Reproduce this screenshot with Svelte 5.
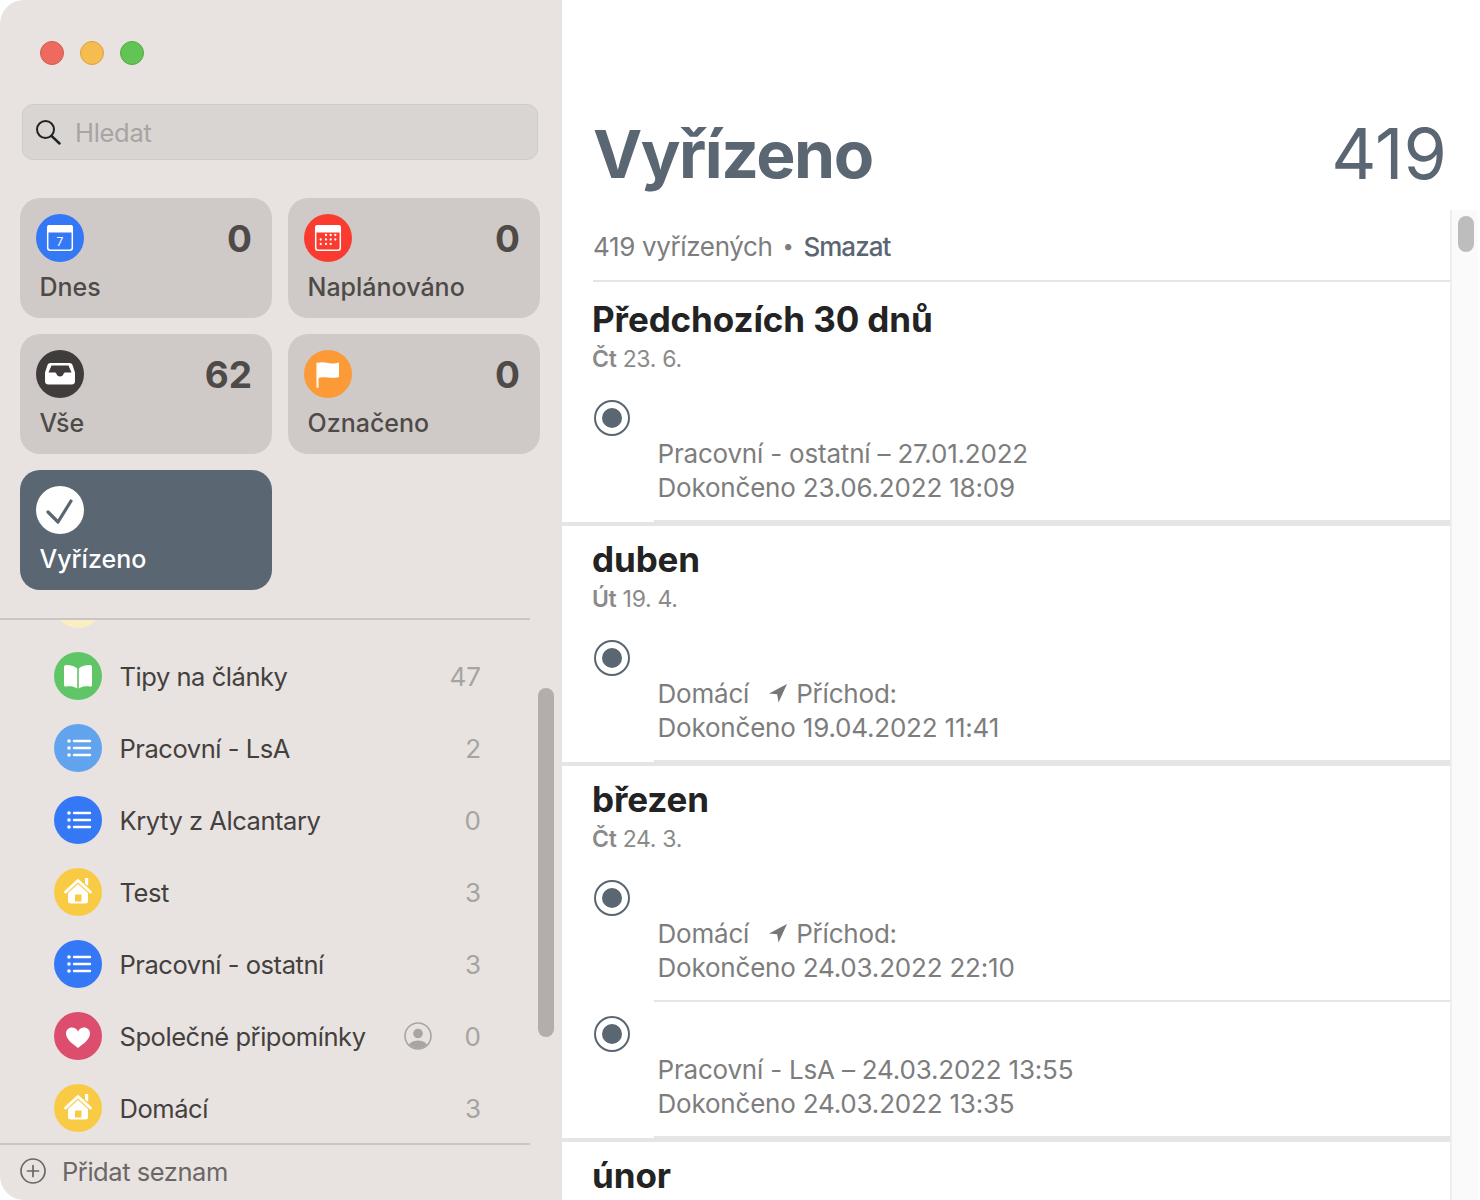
<script>
  const smart = [
    { id: "today", name: "Dnes", count: 0, color: "#3478f6" },
    { id: "scheduled", name: "Naplánováno", count: 0, color: "#fb3b30" },
    { id: "all", name: "Vše", count: 62, color: "#3f3c3b" },
    { id: "flagged", name: "Označeno", count: 0, color: "#fd9a38" },
    { id: "done", name: "Vyřízeno", count: null, color: "#fff", active: true }
  ];

  const lists = [
    { name: "", count: "", icon: "none", color: "#f9efc2" },
    { name: "Tipy na články", count: 47, icon: "book", color: "#5fc566" },
    { name: "Pracovní - LsA", count: 2, icon: "list", color: "#62a3ee" },
    { name: "Kryty z Alcantary", count: 0, icon: "list", color: "#3478f6" },
    { name: "Test", count: 3, icon: "house", color: "#f9cb45" },
    { name: "Pracovní - ostatní", count: 3, icon: "list", color: "#3478f6" },
    { name: "Společné připomínky", count: 0, icon: "heart", color: "#dc4d6e", shared: true },
    { name: "Domácí", count: 3, icon: "house", color: "#f9cb45" }
  ];

  const sections = [
    {
      title: "Předchozích 30 dnů",
      day: "Čt",
      date: "23. 6.",
      rows: [{ list: "Pracovní - ostatní – 27.01.2022", done: "Dokončeno 23.06.2022 18:09" }]
    },
    {
      title: "duben",
      day: "Út",
      date: "19. 4.",
      rows: [{ list: "Domácí", arrival: true, done: "Dokončeno 19.04.2022 11:41" }]
    },
    {
      title: "březen",
      day: "Čt",
      date: "24. 3.",
      rows: [
        { list: "Domácí", arrival: true, done: "Dokončeno 24.03.2022 22:10" },
        { list: "Pracovní - LsA – 24.03.2022 13:55", done: "Dokončeno 24.03.2022 13:35" }
      ]
    },
    { title: "únor", rows: [] }
  ];
</script>

{#snippet listGlyph(icon)}
  {#if icon === "list"}
    <circle cx="15" cy="17" r="1.8" fill="#fff" />
    <circle cx="15" cy="24" r="1.8" fill="#fff" />
    <circle cx="15" cy="31" r="1.8" fill="#fff" />
    <path d="M20 17h16M20 24h16M20 31h16" stroke="#fff" stroke-width="2.4" stroke-linecap="round" />
  {:else if icon === "book"}
    <path d="M23.200 16.500C20 13.500 15 12.800 11.800 13 10.800 13.100 10 14 10 15V33C10 34.200 10.800 34.800 11.800 34.600 15.500 34 20 34.300 23.200 36.500Z" fill="#fff" />
    <path d="M24.800 16.500C28 13.500 33 12.800 36.200 13 37.200 13.100 38 14 38 15V33C38 34.200 37.200 34.800 36.200 34.600 32.500 34 28 34.300 24.800 36.500Z" fill="#fff" />
  {:else if icon === "house"}
    <path d="M31 10h3.200v8l-3.200-2.500Z" fill="#fff" />
    <path d="M11.500 24 24 12.500 36.500 24" fill="none" stroke="#fff" stroke-width="2.800" stroke-linecap="round" stroke-linejoin="round" />
    <path fill-rule="evenodd" d="M24 16 34 25V33a2.500 2.500 0 0 1-2.500 2.500h-15A2.500 2.500 0 0 1 14 33V25ZM21 26.500V33.500H27.500V26.500Z" fill="#fff" />
  {:else if icon === "heart"}
    <path d="M24 36C18 31.500 12 27 12 21.500 12 18 14.700 15.500 17.800 15.500 20.500 15.500 22.800 17 24 19.500 25.200 17 27.500 15.500 30.200 15.500 33.300 15.500 36 18 36 21.500 36 27 30 31.500 24 36Z" fill="#fff" />
  {/if}
{/snippet}

{#snippet smartGlyph(id)}
  {#if id === "today" || id === "scheduled"}
    <rect x="11.700" y="11.700" width="24.600" height="24.600" rx="2.500" fill="none" stroke="#fff" stroke-width="1.500" />
    <path d="M11 18.500V13.500A2.500 2.500 0 0 1 13.500 11H34.500A2.500 2.500 0 0 1 37 13.500V18.500Z" fill="#fff" />
    {#if id === "today"}
      <text x="24" y="32" class="cal-day">7</text>
    {:else}
      {#each [[22, 21], [26.7, 21], [31.300, 21], [16.700, 25.500], [22, 25.500], [26.7, 25.500], [31.300, 25.500], [16.700, 30], [22, 30], [26.7, 30]] as [cx, cy]}
        <circle {cx} {cy} r="1.150" fill="#fff" />
      {/each}
    {/if}
  {:else if id === "all"}
    <path fill-rule="evenodd" d="M14.500 13H33.500C35 13 36 13.800 36.500 15L39 22.500V31A3.500 3.500 0 0 1 35.500 34.500H12.500A3.500 3.500 0 0 1 9 31V22.500L11.500 15C12 13.800 13 13 14.500 13ZM15.500 15.500 12.500 22.500H18.500C19.800 22.500 20 23 20.500 24 21.300 25.800 22.500 26.500 24 26.500S26.700 25.800 27.500 24C28 23 28.200 22.500 29.500 22.500H35.500L32.500 15.500Z" fill="#fff" />
  {:else if id === "flagged"}
    <path d="M13.500 13.500V37" stroke="#fff8e8" stroke-width="2.200" stroke-linecap="round" />
    <path d="M14 13C20 10.500 25 15.500 35 12.500V27C27 29.500 20 25.500 14 28Z" fill="#fff" />
  {:else}
    <path d="M12 26 22 36 35 15" fill="none" stroke="#5a6672" stroke-width="3.200" stroke-linecap="round" stroke-linejoin="round" />
  {/if}
{/snippet}

<div class="window">
  <aside class="sidebar">
    <div class="lights">
      <span class="light red"></span>
      <span class="light yellow"></span>
      <span class="light green"></span>
    </div>

    <div class="search">
      <svg width="26" height="26" viewBox="0 0 26 26" fill="none" stroke="#222" stroke-width="2">
        <circle cx="10.500" cy="10.500" r="8.500" />
        <path d="M16.500 16.800 24.500 24.500" stroke-width="2.500" stroke-linecap="round" />
      </svg>
      <span>Hledat</span>
    </div>

    <div class="cards">
      {#each smart as card}
        <div class="card" class:active={card.active}>
          <div class="card-top">
            <svg class="round" width="48" height="48" viewBox="0 0 48 48">
              <circle cx="24" cy="24" r="24" fill={card.color} />
              {@render smartGlyph(card.id)}
            </svg>
            <b>{card.count ?? ""}</b>
          </div>
          <div class="card-name">{card.name}</div>
        </div>
      {/each}
    </div>

    <div class="rule"></div>

    <div class="lists">
      <div class="lists-inner">
        {#each lists as item}
          <div class="row">
            <svg width="48" height="48" viewBox="0 0 48 48">
              <circle cx="24" cy="24" r="24" fill={item.color} />
              {@render listGlyph(item.icon)}
            </svg>
            <span class="row-name">{item.name}</span>
            {#if item.shared}
              <svg class="shared" width="28" height="28" viewBox="0 0 28 28">
                <defs>
                  <clipPath id="sharedClip"><circle cx="14" cy="14" r="12.500" /></clipPath>
                </defs>
                <circle cx="14" cy="11.500" r="4.800" fill="#a9a5a3" />
                <ellipse cx="14" cy="25" rx="10" ry="6.500" fill="#a9a5a3" clip-path="url(#sharedClip)" />
                <circle cx="14" cy="14" r="13" fill="none" stroke="#a9a5a3" stroke-width="1.600" />
              </svg>
            {/if}
            <span class="row-count">{item.count}</span>
          </div>
        {/each}
      </div>
      <div class="side-thumb"></div>
    </div>

    <div class="rule bottom"></div>

    <div class="add">
      <svg width="26" height="26" viewBox="0 0 26 26" fill="none" stroke="#6b6765" stroke-width="1.700">
        <circle cx="13" cy="13" r="12" />
        <path d="M13 7.500V18.500M7.500 13H18.500" stroke-linecap="round" />
      </svg>
      <span>Přidat seznam</span>
    </div>
  </aside>

  <main class="main">
    <header class="head">
      <h1>Vyřízeno</h1>
      <span class="total">419</span>
    </header>

    <div class="body">
      <div class="content">
        <div class="summary">
          <span>419 vyřízených</span>
          <i>•</i>
          <strong>Smazat</strong>
        </div>

        {#each sections as section}
          <section class="group">
            <h2>{section.title}</h2>
            {#if section.date}
              <div class="date"><em>{section.day}</em> {section.date}</div>
            {/if}
            {#each section.rows as row, i}
              <div class="reminder" class:next={i > 0}>
                <span class="radio"></span>
                <div class="meta">
                  <div class="line">
                    <span>{row.list}</span>
                    {#if row.arrival}
                      <svg class="arrow" width="20" height="20" viewBox="0 0 20 20">
                        <path d="M19 1 1 10.500 9.200 11.300 10.500 19.500Z" fill="#777" />
                      </svg>
                      <span>Příchod:</span>
                    {/if}
                  </div>
                  <div class="line">{row.done}</div>
                </div>
              </div>
            {/each}
          </section>
        {/each}
      </div>

      <div class="gutter"><div class="thumb"></div></div>
    </div>
  </main>
</div>

<style>
  :global(body) {
    background: #fff;
  }

  .window {
    display: flex;
    height: 1200px;
    overflow: hidden;
    font-family: Inter, "Noto Sans", sans-serif;
  }

  /* Sidebar */
  .sidebar {
    flex: none;
    display: flex;
    flex-direction: column;
    width: 562px;
    height: 1200px;
    box-sizing: border-box;
    background: #e8e3e1;
    border-radius: 24px 0 0 24px;
  }

  .lights {
    display: flex;
    gap: 16px;
    padding: 41px 0 0 40px;
  }
  .light {
    width: 24px;
    height: 24px;
    border-radius: 50%;
    box-sizing: border-box;
  }
  .red {
    background: #ee6a5f;
    border: 1px solid #d4594f;
  }
  .yellow {
    background: #f5bd4f;
    border: 1px solid #d9a33f;
  }
  .green {
    background: #61c454;
    border: 1px solid #52ab46;
  }

  .search {
    display: flex;
    align-items: center;
    gap: 14px;
    box-sizing: border-box;
    width: 516px;
    height: 56px;
    margin: 39px 0 0 22px;
    padding: 0 0 0 12px;
    background: #d9d5d3;
    border: 1px solid #d0cbc9;
    border-radius: 11px;
    font-size: 25.500px;
    letter-spacing: -0.300px;
    color: #a8a4a2;
  }

  .cards {
    display: grid;
    grid-template-columns: 252px 252px;
    grid-auto-rows: 120px;
    gap: 16px;
    margin: 38px 0 0 20px;
  }
  .card {
    box-sizing: border-box;
    padding: 16px 20px 0 16px;
    background: #cfcac8;
    border-radius: 20px;
    color: #4e4a48;
  }
  .card.active {
    background: #5a6672;
    color: #fff;
  }
  .card-top {
    display: flex;
    justify-content: space-between;
    height: 48px;
  }
  .card-top b {
    font-size: 37px;
    line-height: 50px;
    font-weight: 700;
  }
  .card-name {
    margin: 8px 0 0 3.500px;
    font-size: 25px;
    line-height: 34px;
    font-weight: 500;
  }
  .cal-day {
    font-family: Inter, sans-serif;
    font-size: 12px;
    fill: #fff;
    text-anchor: middle;
  }

  .rule {
    flex: none;
    width: 530px;
    height: 2px;
    margin-top: 28px;
    background: #cbc6c4;
  }
  .rule.bottom {
    margin-top: 0;
  }

  .lists {
    position: relative;
    height: 523px;
    overflow: hidden;
  }
  .lists-inner {
    margin-top: -52px;
  }
  .row {
    display: flex;
    align-items: center;
    height: 72px;
    padding: 0 81px 0 54px;
  }
  .row-name {
    flex: 1;
    margin-left: 17.500px;
    font-size: 25.500px;
    letter-spacing: -0.450px;
    color: #43403e;
  }
  .row-count {
    min-width: 49px;
    text-align: right;
    font-size: 26px;
    color: #a7a3a1;
  }
  .side-thumb {
    position: absolute;
    top: 68px;
    left: 538px;
    width: 16px;
    height: 349px;
    background: #b3aeab;
    border-radius: 8px;
  }

  .add {
    display: flex;
    align-items: center;
    gap: 16px;
    box-sizing: border-box;
    height: 55px;
    padding: 0 0 3px 20px;
    font-size: 25.500px;
    letter-spacing: -0.450px;
    color: #6b6765;
  }

  /* Main column */
  .main {
    flex: 1;
    display: flex;
    flex-direction: column;
    min-width: 0;
    background: #fff;
  }
  .head {
    flex: none;
    display: flex;
    justify-content: space-between;
    align-items: flex-start;
    box-sizing: border-box;
    height: 210px;
    padding: 112px 33px 0 31px;
    color: #5a6672;
  }
  .head h1 {
    margin: 0;
    font-size: 66px;
    line-height: 84px;
    font-weight: 700;
    letter-spacing: -1.500px;
  }
  .total {
    font-size: 70px;
    line-height: 84px;
    font-weight: 400;
  }

  .body {
    flex: 1;
    display: flex;
    min-height: 0;
  }
  .content {
    flex: none;
    width: 888px;
    overflow: hidden;
  }
  .summary {
    display: flex;
    align-items: center;
    gap: 10px;
    box-sizing: border-box;
    height: 72px;
    margin-left: 31px;
    padding-top: 2px;
    border-bottom: 2px solid #e5e5e5;
    font-size: 26px;
    letter-spacing: -0.350px;
    color: #7d7d7d;
  }
  .summary i {
    font-style: normal;
    font-size: 20px;
  }
  .summary strong {
    font-weight: 500;
    letter-spacing: -1px;
    color: #5a6672;
  }

  .group {
    padding-top: 13px;
  }
  .group:first-of-type {
    padding-top: 17px;
  }
  .group h2 {
    margin: 0 0 0 30px;
    font-size: 35px;
    line-height: 40px;
    font-weight: 700;
    letter-spacing: -0.100px;
    color: #232323;
  }
  .date {
    margin: 5px 0 0 30px;
    font-size: 23px;
    line-height: 30px;
    letter-spacing: -0.300px;
    color: #8a8a8a;
  }
  .date em {
    font-style: normal;
    font-weight: 600;
  }

  .reminder {
    position: relative;
    box-sizing: border-box;
    height: 130px;
    margin-top: 16px;
    padding: 46px 0 0 95.500px;
  }
  .reminder.next {
    height: 136px;
    margin-top: 0;
    padding-top: 52px;
  }
  .reminder.next::before {
    content: "";
    position: absolute;
    top: 0;
    left: 92px;
    right: 0;
    height: 2px;
    background: #e5e5e5;
  }
  .radio {
    position: absolute;
    left: 32px;
    top: 10px;
    box-sizing: border-box;
    width: 36px;
    height: 36px;
    padding: 6px;
    border: 2px solid #5a6672;
    border-radius: 50%;
    background: #5a6672;
    background-clip: content-box;
  }
  .reminder.next .radio {
    top: 16px;
  }
  .group:has(.reminder) {
    border-bottom: 4px solid #e5e5e5;
  }
  /* the bar under a group is thicker past the radio column */
  .group:has(.reminder)::after {
    content: "";
    display: block;
    height: 2px;
    margin-left: 92px;
    background: #e5e5e5;
  }
  .line {
    display: flex;
    align-items: center;
    height: 34px;
    font-size: 26px;
    letter-spacing: -0.200px;
    color: #7d7d7d;
    white-space: nowrap;
  }
  .arrow {
    margin: 0 8px 0 19px;
  }

  .gutter {
    flex: none;
    box-sizing: border-box;
    width: 28px;
    padding: 6px 4px 0 6px;
    background: #fafafa;
    border-left: 2px solid #eee;
  }
  .thumb {
    width: 16px;
    height: 36px;
    background: #bdbdbd;
    border-radius: 8px;
  }
</style>
